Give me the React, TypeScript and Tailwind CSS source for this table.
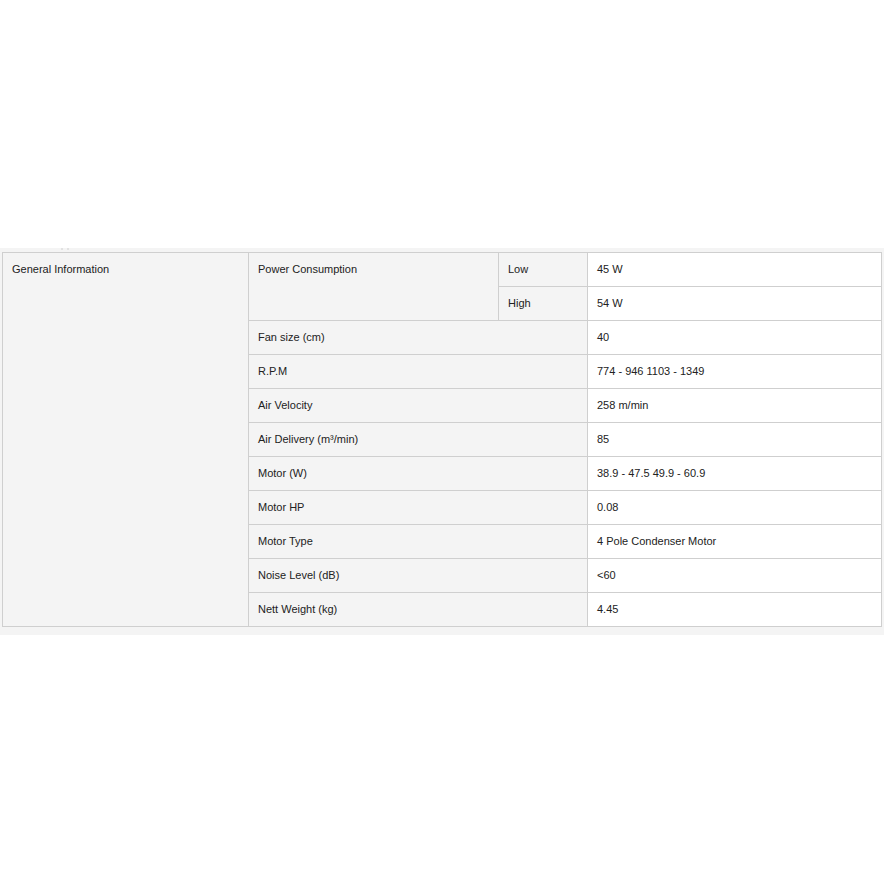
const rows: [string, string][] = [
  ['Fan size (cm)', '40'],
  ['R.P.M', '774 - 946 1103 - 1349'],
  ['Air Velocity', '258 m/min'],
  ['Air Delivery (m³/min)', '85'],
  ['Motor (W)', '38.9 - 47.5 49.9 - 60.9'],
  ['Motor HP', '0.08'],
  ['Motor Type', '4 Pole Condenser Motor'],
  ['Noise Level (dB)', '<60'],
  ['Nett Weight (kg)', '4.45'],
];

export default function App() {
  const cell = 'border border-[#cfcfcf] px-[9px] pb-[2px] h-[34px] align-middle';
  return (
    <div className="w-[884px] h-[884px] bg-white font-['Liberation_Sans',Arial,sans-serif] text-[11px] text-[#222]">
      <div className="h-[248px]" />
      <div className="bg-[#f4f4f4] pt-[4px] pb-[8px] pl-[2px] pr-[3px] relative">
        <div className="absolute left-[61px] top-0 flex gap-[4px]">
          <span className="w-[2px] h-[2px] bg-[#e2e2e2]" />
          <span className="w-[2px] h-[2px] bg-[#e2e2e2]" />
        </div>
        <table className="w-[879px] border-collapse table-fixed leading-[14px]">
          <colgroup>
            <col className="w-[246px]" />
            <col className="w-[250px]" />
            <col className="w-[89px]" />
            <col className="w-[294px]" />
          </colgroup>
          <tbody>
            <tr>
              <td rowSpan={11} className="border border-[#cfcfcf] px-[9px] pt-[9px] align-top bg-[#f4f4f4]">
                General Information
              </td>
              <td rowSpan={2} className="border border-[#cfcfcf] px-[9px] pt-[9px] align-top bg-[#f4f4f4]">
                Power Consumption
              </td>
              <td className={`${cell} bg-[#f4f4f4]`}>Low</td>
              <td className={`${cell} bg-white`}>45 W</td>
            </tr>
            <tr>
              <td className={`${cell} bg-[#f4f4f4]`}>High</td>
              <td className={`${cell} bg-white`}>54 W</td>
            </tr>
            {rows.map(([k, v]) => (
              <tr key={k}>
                <td colSpan={2} className={`${cell} bg-[#f4f4f4]`}>{k}</td>
                <td className={`${cell} bg-white`}>{v}</td>
              </tr>
            ))}
          </tbody>
        </table>
      </div>
    </div>
  );
}
